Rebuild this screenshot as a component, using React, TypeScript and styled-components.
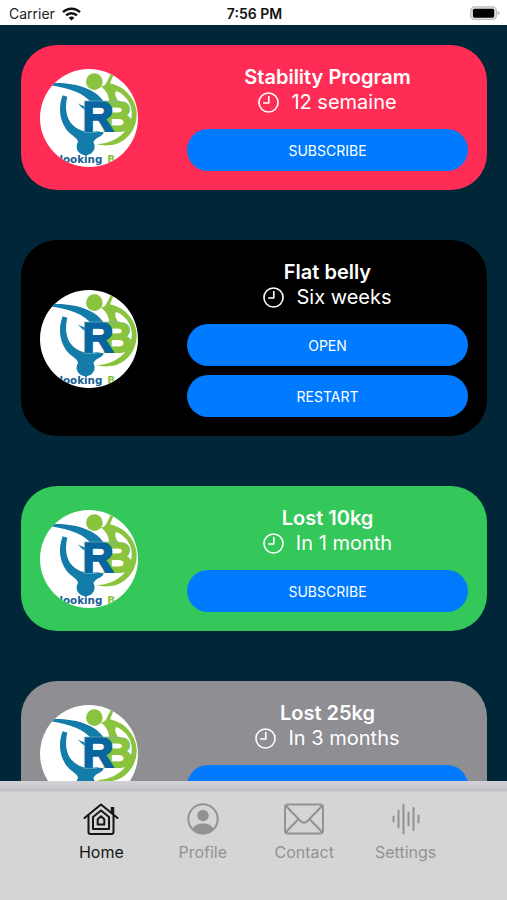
import React from "react";
import styled, { createGlobalStyle } from "styled-components";

const GlobalStyle = createGlobalStyle`
  * { box-sizing: border-box; }
  body {
    margin: 0;
    background: #002637;
    font-family: Inter, "Liberation Sans", sans-serif;
  }
`;

const Screen = styled.div`
  display: flex;
  flex-direction: column;
  height: 100vh;
  overflow: hidden;
`;

const StatusBar = styled.header`
  display: grid;
  grid-template-columns: 1fr auto 1fr;
  align-items: center;
  flex: none;
  height: 25px;
  padding: 2px 7px 0 9px;
  background: #fff;
  color: #222;
  font-size: 14px;
  line-height: 20px;
`;

const Carrier = styled.div`
  display: flex;
  align-items: center;
  gap: 7px;
`;

const Time = styled.time`
  color: #111;
  font-weight: 600;
`;

const BatteryIcon = styled.svg`
  justify-self: end;
`;

const ProgramList = styled.main`
  display: flex;
  flex: 1;
  flex-direction: column;
  gap: 50px;
  min-height: 0;
  padding: 20px 20px 0 21px;
  overflow: hidden;
`;

const Card = styled.article<{ $color: string }>`
  display: flex;
  flex: none;
  align-items: center;
  gap: 49px;
  padding: 20px 19px 19px;
  border-radius: 36px;
  background: ${(p) => p.$color};
  color: #fff;
`;

const Logo = styled.svg`
  flex: none;
  width: 98px;
  height: 98px;
  border-radius: 50%;
  background: #fff;
`;

const Details = styled.div`
  display: flex;
  flex: 1;
  flex-direction: column;
  min-width: 0;
`;

const Title = styled.h2`
  margin: 0;
  font-size: 20px;
  font-weight: 600;
  line-height: 25px;
  text-align: center;
`;

const Duration = styled.p`
  display: flex;
  align-items: center;
  justify-content: center;
  gap: 12px;
  margin: 0;
  font-size: 20px;
  line-height: 25px;
`;

const Actions = styled.div`
  display: flex;
  flex-direction: column;
  gap: 9px;
  margin-top: 14px;
`;

const ActionButton = styled.button`
  height: 42px;
  padding: 0;
  border: 0;
  border-radius: 21px;
  background: #007aff;
  color: #fff;
  font: inherit;
  font-size: 14px;
`;

const TabBar = styled.nav`
  display: flex;
  flex: none;
  height: 119px;
  padding: 22px 10% 0;
  background: linear-gradient(#d3d2d8, #c6c5ca 8px, #b9b9be 9px, #d5d5d5 11px);
`;

const Tab = styled.a<{ $active?: boolean }>`
  display: flex;
  flex: 1;
  flex-direction: column;
  align-items: center;
  gap: 7px;
  color: ${(p) => (p.$active ? "#151515" : "#929292")};
  font-size: 16px;
  line-height: 20px;
  text-decoration: none;
`;

const WifiIcon = () => (
  <svg width="19" height="14" viewBox="0 0 19 14" fill="none" stroke="#111" strokeWidth="2.4" aria-hidden="true">
    <path d="M1 5.2C5.7.6 13.3.6 18 5.2" />
    <path d="M4.1 8.4c3-2.9 7.8-2.9 10.8 0" />
    <path d="M9.5 13.6 6.6 10.7c1.6-1.5 4.2-1.5 5.8 0Z" fill="#111" stroke="none" />
  </svg>
);

const Battery = () => (
  <BatteryIcon width="30" height="15" viewBox="0 0 31 15" aria-label="Battery full">
    <rect x=".7" y=".7" width="26.6" height="13" rx="4" fill="#e4e4e4" stroke="#bcbcbc" strokeWidth="1.2" />
    <rect x="3" y="2.6" width="22" height="9.2" rx="1.6" fill="#000" />
    <path d="M28.6 5v4.6c1.2-.4 2-1.2 2-2.3s-.8-1.9-2-2.3Z" fill="#b5b5b5" />
  </BatteryIcon>
);

const ClockIcon = () => (
  <svg width="21" height="21" viewBox="0 0 22 22" fill="none" stroke="currentColor" strokeWidth="1.7" strokeLinecap="round" strokeLinejoin="round" aria-hidden="true">
    <circle cx="11" cy="11" r="10" />
    <path d="M11.3 4.7v6.8H6" />
  </svg>
);

const ProgramLogo = () => (
  <Logo viewBox="29 26 294 294" role="img" aria-label="Program logo">
    <g fill="#8ac43f">
      <circle cx="192" cy="64" r="25" />
      <path d="M210 77c9 2 14-2 18-9l13-27 8 4-10 24c35 7 65 33 76 67 15 48-12 100-57 115-21 6-42 5-60 1 38-3 68-15 88-42 23-32 25-68 2-96-8-10-20-19-31-22-6 10 0 19 8 34l-28 2c-1-22-9-38-27-51Z" />
    </g>
    <g fill="#137ca8">
      <path d="M60 68c47-2 96 5 130 27 14 9 25 20 32 32h-40c-18-26-62-43-122-52Z" />
      <path d="M97 105l14 4c-8 31-4 63 14 83 17 19 47 28 73 21l22 3c-2 14-24 13-31 30 7 10 4 24-4 31-11 10-29 9-38 0-10-9-10-22-4-32-1-14-24-21-36-39-21-31-23-67-10-101Z" />
      <path d="M142 129c9 6 18 9 27 10v14c-10-6-18-14-27-24Z" />
    </g>
    <g fontFamily="Liberation Sans" fontWeight="700" fontSize="128" strokeWidth="6">
      <text x="214" y="212" fill="#8ac43f" stroke="#8ac43f">B</text>
      <text x="157" y="212" fill="#0865a0" stroke="#0865a0">R</text>
    </g>
    <path d="M162 122h76c8 1 12 7 12 14M162 122v94h38M240 122h28" fill="none" stroke="#79b3bd" strokeWidth="2" />
    <g fontFamily="DejaVu Sans" fontWeight="700" fontSize="31">
      <text x="216" y="308" fill="#155f94" textAnchor="end">looking</text>
      <text x="231" y="308" fill="#8ac43f">B</text>
    </g>
  </Logo>
);

const HomeIcon = () => (
  <svg width="36" height="32" viewBox="0 0 36 32" fill="none" stroke="currentColor" strokeWidth="2" strokeLinecap="round" strokeLinejoin="round" aria-hidden="true">
    <path d="M1.5 15 18 1.500 34.500 15" />
    <path d="M29.500 4v7" strokeWidth="3.500" strokeLinecap="butt" />
    <path d="M5.500 12.500V29a2 2 0 0 0 2 2h21a2 2 0 0 0 2-2V12.500" />
    <path d="M10 26V14L18 7.500l8 6.500v12Z" />
    <path d="M14.700 21.500v-5.300L18 13.200l3.300 3v5.300Z" />
  </svg>
);

const ProfileIcon = () => (
  <svg width="32" height="32" viewBox="0 0 32 32" fill="currentColor" aria-hidden="true">
    <circle cx="16" cy="16" r="14.7" fill="none" stroke="currentColor" strokeWidth="2" />
    <circle cx="16" cy="12.5" r="5.7" />
    <path d="M5.500 26c2-4 6-5.500 10.500-5.500S24.500 22 26.500 26C21 32 11 32 5.500 26Z" />
  </svg>
);

const ContactIcon = () => (
  <svg width="40" height="32" viewBox="0 0 40 32" fill="none" stroke="currentColor" strokeWidth="2" strokeLinecap="round" strokeLinejoin="round" aria-hidden="true">
    <rect x="1" y="1.5" width="38" height="29" rx="3" />
    <path d="m2 3 14.500 15c2 2.200 5 2.200 7 0L38 3M2 29l12.500-13M38 29 25.500 16" />
  </svg>
);

const SettingsIcon = () => (
  <svg width="28" height="32" viewBox="0 0 28 32" fill="none" stroke="currentColor" strokeWidth="2" strokeLinecap="round" aria-hidden="true">
    <path d="M1.500 13.500v5M6.500 7.500v17M11.500 1.500v29M16.500 9.500v13M21.500 5v22M26.500 12.500v7" />
  </svg>
);

const programs = [
  { title: "Stability Program", duration: "12 semaine", color: "#ff2d55", actions: ["SUBSCRIBE"] },
  { title: "Flat belly", duration: "Six weeks", color: "#000", actions: ["OPEN", "RESTART"] },
  { title: "Lost 10kg", duration: "In 1 month", color: "#34c759", actions: ["SUBSCRIBE"] },
  { title: "Lost 25kg", duration: "In 3 months", color: "#8e8e93", actions: ["SUBSCRIBE"] },
];

const tabs = [
  { label: "Home", Icon: HomeIcon, active: true },
  { label: "Profile", Icon: ProfileIcon },
  { label: "Contact", Icon: ContactIcon },
  { label: "Settings", Icon: SettingsIcon },
];

export default function App() {
  return (
    <>
      <GlobalStyle />
      <Screen>
        <StatusBar>
          <Carrier>
            Carrier
            <WifiIcon />
          </Carrier>
          <Time>7:56 PM</Time>
          <Battery />
        </StatusBar>
        <ProgramList>
          {programs.map((program) => (
            <Card key={program.title} $color={program.color}>
              <ProgramLogo />
              <Details>
                <Title>{program.title}</Title>
                <Duration>
                  <ClockIcon />
                  {program.duration}
                </Duration>
                <Actions>
                  {program.actions.map((action) => (
                    <ActionButton key={action} type="button">
                      {action}
                    </ActionButton>
                  ))}
                </Actions>
              </Details>
            </Card>
          ))}
        </ProgramList>
        <TabBar>
          {tabs.map(({ label, Icon, active }) => (
            <Tab key={label} href={`#${label.toLowerCase()}`} $active={active} aria-current={active ? "page" : undefined}>
              <Icon />
              {label}
            </Tab>
          ))}
        </TabBar>
      </Screen>
    </>
  );
}
